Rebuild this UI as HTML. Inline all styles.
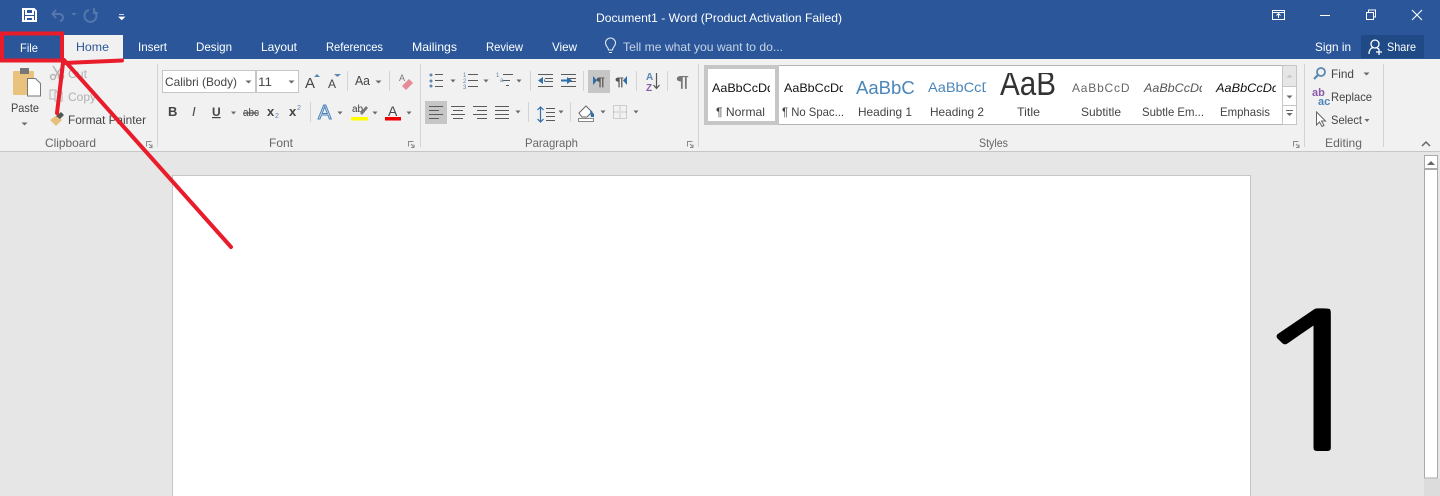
<!DOCTYPE html>
<html><head><meta charset="utf-8"><title>Document1 - Word</title>
<style>
html,body{margin:0;padding:0;width:1440px;height:496px;overflow:hidden;background:#e6e6e6}
#wrap{position:absolute;left:0;top:0;width:1440px;height:496px;overflow:hidden;contain:strict}
svg{display:block;position:absolute;left:0;top:0}
text{font-family:"Liberation Sans",sans-serif;font-size:12px;fill:#444}
.w text{fill:#fff}
.s{fill:none;stroke:#5a5a5a;stroke-width:1}
.b{stroke:#5a87b0;stroke-width:1;fill:none}
.d{fill:#6a6a6a}
.sep{stroke:#d4d4d4;stroke-width:1}
#one{position:absolute;left:1244px;top:288px;height:190px;font:190px/190px "NanumGothic",sans-serif;color:#000;transform-origin:0 0;transform:scaleX(1.23);-webkit-text-stroke:1px #000}
</style></head><body><div id="wrap">
<svg width="1440" height="496" viewBox="0 0 1440 496">
<rect width="1440" height="59" fill="#2b579a"/>
<rect y="59" width="1440" height="92" fill="#f1f1f1"/>
<rect y="151" width="1440" height="1" fill="#c6c6c6"/>
<rect x="63" y="35" width="60" height="25" fill="#f1f1f1"/>
<rect x="172.500" y="175.500" width="1078" height="330" fill="#fff" stroke="#c6c6c6"/>
<rect x="1424" y="152" width="16" height="344" fill="#e6e6e6"/>
<rect x="1424.500" y="155.500" width="13" height="13" fill="#fff" stroke="#aaa"/>
<path d="M1427 165l4-4 4 4z" fill="#666"/>
<rect x="1424.500" y="169.500" width="13" height="308.500" fill="#fff" stroke="#aaa"/>
<rect x="1424" y="479" width="16" height="17" fill="#dcdcdc"/>

<!-- QAT -->
<path d="M23 9h11l2 2v10h-13z M26 9v5h7v-5 M26 21v-4h7v4" fill="none" stroke="#fff" stroke-width="2"/>
<path d="M56 10l-3.500 4 3.500 4M53 14h6a3.500 3.500 0 0 1 1 7" fill="none" stroke="#5577ab" stroke-width="2"/>
<path d="M71 13l3 2.500 3-2.500z" fill="#5577ab"/>
<path d="M89 10a6 6 0 1 0 5 1M94 8v5h4" fill="none" stroke="#5577ab" stroke-width="2"/>
<path d="M119 14.500h5M119 17h5.500l-2.700 2.700z" fill="#fff" stroke="#fff" stroke-width=".8"/>

<!-- window buttons -->
<g fill="none" stroke="#fff">
<rect x="1272.500" y="10.500" width="12" height="9"/><path d="M1272.500 12.500h12M1278.500 18v-4M1276.500 15.500l2-2 2 2"/>
<path d="M1320 15.500h10"/>
<rect x="1366.500" y="12.500" width="7" height="7"/><path d="M1368.500 12.500v-2.500h7v7h-2"/>
<path d="M1412 10l10 10M1422 10l-10 10" stroke-width="1.100"/>
</g>
<rect x="1361" y="35" width="63" height="23" fill="#1f4a85"/>
<g fill="none" stroke="#fff" stroke-width="1.300"><circle cx="1375" cy="44" r="4"/><path d="M1369 54c0-4 2-6 4-6.500M1377 48l2 1M1376 52h6M1379 49v6"/></g>
<g fill="none" stroke="#e4e8f0" stroke-width="1.100"><path d="M608.500 50c0-3-3-3.500-3-7a5 5 0 0 1 10 0c0 3.500-3 4-3 7zM609 52.500h3"/></g>

<g class="w">
<text x="596" y="22" textLength="246" lengthAdjust="spacingAndGlyphs">Document1 - Word (Product Activation Failed)</text>
<text x="20" y="52" textLength="18" lengthAdjust="spacingAndGlyphs">File</text>
<text x="138" y="51" textLength="29" lengthAdjust="spacingAndGlyphs">Insert</text>
<text x="196" y="51" textLength="36" lengthAdjust="spacingAndGlyphs">Design</text>
<text x="261" y="51" textLength="36" lengthAdjust="spacingAndGlyphs">Layout</text>
<text x="326" y="51" textLength="57" lengthAdjust="spacingAndGlyphs">References</text>
<text x="412" y="51" textLength="45" lengthAdjust="spacingAndGlyphs">Mailings</text>
<text x="486" y="51" textLength="37" lengthAdjust="spacingAndGlyphs">Review</text>
<text x="552" y="51" textLength="25" lengthAdjust="spacingAndGlyphs">View</text>
<text x="623" y="51" textLength="160" lengthAdjust="spacingAndGlyphs" style="fill:#c6d3e6">Tell me what you want to do...</text>
<text x="1315" y="51" textLength="36" lengthAdjust="spacingAndGlyphs">Sign in</text>
<text x="1387" y="51" textLength="29" lengthAdjust="spacingAndGlyphs">Share</text>
</g>
<text x="76" y="51" textLength="33" lengthAdjust="spacingAndGlyphs" style="fill:#2b579a">Home</text>

<!-- separators -->
<g class="sep">
<path d="M157.500 64v83M420.500 64v83M698.500 64v83M1304.500 64v83M1383.500 64v83"/>
<path d="M347.500 71v20M389.500 71v20M310.500 102v20M530.500 71v20M583.500 71v20M636.500 71v20M667.500 71v20M528.500 102v20M570.500 102v20"/>
</g>

<!-- clipboard -->
<rect x="13" y="71" width="21" height="24" rx="1" fill="#e9c27d"/>
<rect x="20" y="68" width="9" height="6" fill="#777"/>
<path d="M27.500 78.500h8l5 5v12.500h-13z" fill="#fff" stroke="#777"/>
<text x="11" y="112" textLength="28" lengthAdjust="spacingAndGlyphs">Paste</text>
<path d="M21.500 122.500h6l-3 3z" class="d"/>
<g fill="none" stroke="#b5b5b5" stroke-width="1.500"><path d="M53 66l7 11M62 66l-7 11"/><circle cx="53" cy="77" r="2.500"/><circle cx="61" cy="77" r="2.500"/>
<rect x="50" y="90" width="6" height="9" stroke-width="1"/><rect x="55" y="92" width="7" height="9" fill="#f1f1f1" stroke-width="1"/></g>
<text x="68" y="78" textLength="19" lengthAdjust="spacingAndGlyphs" style="fill:#b0b0b0">Cut</text>
<text x="68" y="101" textLength="28" lengthAdjust="spacingAndGlyphs" style="fill:#b0b0b0">Copy</text>
<path d="M50 120l7-5 5 5-6 6z" fill="#e7c07e"/><path d="M56 116l5-4 3 3-4 4z" fill="#555"/>
<text x="68" y="124" textLength="78" lengthAdjust="spacingAndGlyphs">Format Painter</text>
<text x="45" y="147" textLength="51" lengthAdjust="spacingAndGlyphs" style="fill:#666">Clipboard</text>
<g fill="none" stroke="#8a8a8a"><path d="M146.500 146.500v-5h5"/><path d="M149 144l3 3M152 144.500v3h-3"/></g>
<g fill="none" stroke="#8a8a8a"><path d="M408.500 146.500v-5h5M411 144l3 3M414 144.500v3h-3"/><path d="M687.500 146.500v-5h5M690 144l3 3M693 144.500v3h-3"/><path d="M1293.500 146.500v-5h5M1296 144l3 3M1299 144.500v3h-3"/></g>

<!-- font -->
<rect x="162.500" y="70.500" width="93" height="22" fill="#fff" stroke="#c6c6c6"/>
<rect x="256.500" y="70.500" width="42" height="22" fill="#fff" stroke="#c6c6c6"/>
<text x="165" y="86" textLength="72" lengthAdjust="spacingAndGlyphs">Calibri (Body)</text>
<text x="258" y="86" textLength="14" lengthAdjust="spacingAndGlyphs">11</text>
<path class="d" d="M245.500 80.500h6l-3 3zM288.500 80.500h6l-3 3z"/>
<text x="305" y="88" style="font-size:15px">A</text><path d="M314 77l3-3 3 3z" fill="#5a87b0"/>
<text x="328" y="88" style="font-size:12px">A</text><path d="M334 74h7l-3.500 3z" fill="#5a87b0"/>
<text x="355" y="85" textLength="15" lengthAdjust="spacingAndGlyphs" style="font-size:13px">Aa</text>
<path class="d" d="M375.500 80.500h6l-3 3z"/>
<text x="399" y="81" style="font-size:9px;fill:#777">A</text><path d="M402 86l7-7 4 4-7 7z" fill="#e58a96"/>
<text x="168" y="116" style="font-weight:bold;font-size:13px">B</text>
<text x="192" y="116" style="font-style:italic;font-size:13px">I</text>
<text x="212" y="116" style="font-weight:bold;text-decoration:underline">U</text>
<path class="d" d="M231 111.500h5l-2.500 3z"/>
<text x="243" y="116" textLength="16" lengthAdjust="spacingAndGlyphs" style="font-size:11px;text-decoration:line-through">abc</text>
<text x="267" y="116" style="font-weight:bold;font-size:13px">x</text><text x="275" y="118" style="font-size:7px;fill:#5a87b0">2</text>
<text x="289" y="116" style="font-weight:bold;font-size:13px">x</text><text x="297" y="110" style="font-size:7px;fill:#5a87b0">2</text>
<text x="318" y="119" style="font-size:20px;fill:#dbe8f5;stroke:#4d82b8;stroke-width:1">A</text>
<path class="d" d="M337.500 111.500h5l-2.500 3zM372.500 111.500h5l-2.500 3zM406.500 111.500h5l-2.500 3z"/>
<text x="352" y="112" style="font-size:10px">ab</text><path d="M360 113l6-7 2 2-6 7z" fill="#777"/>
<rect x="351" y="117" width="17" height="3.500" fill="#ffff00"/>
<text x="388" y="116" style="font-size:14px">A</text>
<rect x="385" y="117" width="16" height="3.500" fill="#f00000"/>
<text x="269" y="147" textLength="24" lengthAdjust="spacingAndGlyphs" style="fill:#666">Font</text>

<!-- paragraph -->
<rect x="588" y="70" width="22" height="23" fill="#c6c6c6"/>
<rect x="425" y="101" width="22" height="23" fill="#c6c6c6"/>
<g fill="#5a87b0"><circle cx="431" cy="75" r="1.500"/><circle cx="431" cy="81" r="1.500"/><circle cx="431" cy="86" r="1.500"/></g>
<g class="s"><path d="M435 74.500h8M435 80.500h8M435 86.500h8M468 74.500h10M468 80.500h10M468 86.500h10M503 74.500h10M503 80.500h7M506 85.500h3"/></g>
<text x="463" y="77" style="font-size:6px;fill:#5a87b0">1</text><text x="463" y="83" style="font-size:6px;fill:#5a87b0">2</text><text x="463" y="89" style="font-size:6px;fill:#5a87b0">3</text><text x="496" y="77" style="font-size:6px;fill:#5a87b0">1</text><text x="500" y="82" style="font-size:6px;fill:#5a87b0">a</text>
<path class="d" d="M450.500 79.500h5l-2.500 3zM483.500 79.500h5l-2.500 3zM516.500 79.500h5l-2.500 3zM515.500 110.500h5l-2.500 3zM558.500 110.500h5l-2.500 3zM600.500 110.500h5l-2.500 3zM633.500 110.500h5l-2.500 3z"/>
<g class="s"><path d="M538 74.500h15M545 78.500h8M545 81.500h8M538 86.500h15M561 74.500h15M568 78.500h8M568 81.500h8M561 86.500h15"/></g>
<path d="M538 80.500l5-3.500v7zM544 79.500h1v2h-1zM567 77l5 3.500-5 3.500z" fill="#2f6ea8"/><path d="M561 79.500h6v2h-6z" fill="#2f6ea8"/>
<text x="596" y="86" style="font-size:12px;font-weight:bold;fill:#555" textLength="9" lengthAdjust="spacingAndGlyphs">¶</text><path d="M593 76l4 4.500-4 4.500z" fill="#2f6ea8"/>
<text x="615" y="86" style="font-size:12px;font-weight:bold;fill:#555" textLength="9" lengthAdjust="spacingAndGlyphs">¶</text><path d="M627 76l-4 4.500 4 4.500z" fill="#2f6ea8"/>
<text x="646" y="80" style="font-size:10px;fill:#5a87b0;font-weight:bold">A</text><text x="646" y="91" style="font-size:10px;fill:#8a5ca8;font-weight:bold">Z</text>
<path d="M656.500 73v15M653.500 85l3 3.500 3-3.500" fill="none" stroke="#555" stroke-width="1.200"/>
<text x="676" y="87" style="font-size:16px;font-weight:bold;fill:#777" textLength="13" lengthAdjust="spacingAndGlyphs">¶</text>
<g class="s"><path d="M429 106.500h14M429 110.500h10M429 114.500h14M429 118.500h10M451 106.500h14M453 110.500h10M451 114.500h14M453 118.500h10M473 106.500h14M477 110.500h10M473 114.500h14M477 118.500h10M495 106.500h14M495 110.500h14M495 114.500h14M495 118.500h14"/></g>
<path d="M540.500 107v15M537.500 110l3-3 3 3M537.500 119l3 3 3-3" fill="none" stroke="#2f6ea8" stroke-width="1.200"/>
<g class="s"><path d="M546 108.500h9M546 112.500h9M546 116.500h9M546 120.500h9"/></g>
<path d="M579 113l7-7 6 6-5 5h-5z" fill="#fff" stroke="#666"/><path d="M590 110l4 4v3h-3z" fill="#2f6ea8"/>
<rect x="578.500" y="118.500" width="15" height="3" fill="#fff" stroke="#888"/>
<path d="M613.500 105.500h13v13h-13zM620 105.500v13M613.500 112h13" fill="none" stroke="#aaa" stroke-dasharray="1 1"/>
<text x="525" y="147" textLength="53" lengthAdjust="spacingAndGlyphs" style="fill:#666">Paragraph</text>

<!-- styles -->
<rect x="704.500" y="65.500" width="578" height="59" fill="#fff" stroke="#b4b4b4"/>
<rect x="706" y="67" width="71" height="56" fill="none" stroke="#c6c6c6" stroke-width="4"/>
<rect x="1282.500" y="65.500" width="14" height="21" fill="#e6e6e6" stroke="#c6c6c6"/>
<rect x="1282.500" y="86.500" width="14" height="19" fill="#fff" stroke="#c6c6c6"/>
<rect x="1282.500" y="105.500" width="14" height="19" fill="#fff" stroke="#c6c6c6"/>
<path d="M1286.500 77.500l3-3 3 3z" fill="#c6c6c6"/><path class="d" d="M1286.500 95.500h6l-3 3zM1286.500 113h6l-3 3z"/><path d="M1286 110.500h7" stroke="#666"/>
<defs>
<clipPath id="c1"><rect x="711" y="72" width="59" height="28"/></clipPath>
<clipPath id="c2"><rect x="783" y="72" width="60" height="28"/></clipPath>
<clipPath id="c3"><rect x="855" y="72" width="59" height="28"/></clipPath>
<clipPath id="c4"><rect x="927" y="72" width="59" height="28"/></clipPath>
<clipPath id="c5"><rect x="996" y="73" width="66" height="26"/></clipPath>
<clipPath id="c6"><rect x="1071" y="72" width="60" height="28"/></clipPath>
<clipPath id="c7"><rect x="1143" y="72" width="59" height="28"/></clipPath>
<clipPath id="c8"><rect x="1215" y="72" width="61" height="28"/></clipPath>
</defs>
<text x="712" y="92" clip-path="url(#c1)" style="fill:#111" textLength="62" lengthAdjust="spacingAndGlyphs">AaBbCcDd</text>
<text x="784" y="92" clip-path="url(#c2)" style="fill:#111" textLength="62" lengthAdjust="spacingAndGlyphs">AaBbCcDd</text>
<text x="856" y="94" clip-path="url(#c3)" style="font-size:18px;fill:#4a86ba" textLength="68" lengthAdjust="spacingAndGlyphs">AaBbCc</text>
<text x="928" y="92" clip-path="url(#c4)" style="font-size:14px;fill:#4a86ba" textLength="64" lengthAdjust="spacingAndGlyphs">AaBbCcD</text>
<text x="1000" y="95" clip-path="url(#c5)" style="font-size:34px;fill:#333" textLength="56" lengthAdjust="spacingAndGlyphs">AaB</text>
<text x="1072" y="92" clip-path="url(#c6)" style="fill:#666;letter-spacing:.8px">AaBbCcD</text>
<text x="1144" y="92" clip-path="url(#c7)" style="font-style:italic;fill:#555" textLength="62" lengthAdjust="spacingAndGlyphs">AaBbCcDd</text>
<text x="1216" y="92" clip-path="url(#c8)" style="font-style:italic;fill:#111" textLength="63" lengthAdjust="spacingAndGlyphs">AaBbCcDd</text>
<text x="716" y="116" textLength="49" lengthAdjust="spacingAndGlyphs">¶ Normal</text>
<text x="782" y="116" textLength="62" lengthAdjust="spacingAndGlyphs">¶ No Spac...</text>
<text x="858" y="116" textLength="54" lengthAdjust="spacingAndGlyphs">Heading 1</text>
<text x="930" y="116" textLength="54" lengthAdjust="spacingAndGlyphs">Heading 2</text>
<text x="1017" y="116" textLength="23" lengthAdjust="spacingAndGlyphs">Title</text>
<text x="1081" y="116" textLength="40" lengthAdjust="spacingAndGlyphs">Subtitle</text>
<text x="1142" y="116" textLength="62" lengthAdjust="spacingAndGlyphs">Subtle Em...</text>
<text x="1220" y="116" textLength="50" lengthAdjust="spacingAndGlyphs">Emphasis</text>
<text x="979" y="147" textLength="29" lengthAdjust="spacingAndGlyphs" style="fill:#666">Styles</text>

<!-- editing -->
<circle cx="1321" cy="72" r="4" fill="none" stroke="#5a87b0" stroke-width="1.800"/><path d="M1318 75l-4 4" stroke="#5a87b0" stroke-width="2.200"/>
<text x="1331" y="78" textLength="23" lengthAdjust="spacingAndGlyphs">Find</text>
<path class="d" d="M1363.500 72.500h6l-3 3zM1364.500 119h5l-2.500 3z"/>
<text x="1312" y="96" style="font-size:11px;font-weight:bold;fill:#8a5ca8">ab</text>
<text x="1318" y="105" style="font-size:11px;font-weight:bold;fill:#4f86b8">ac</text>
<text x="1331" y="101" textLength="41" lengthAdjust="spacingAndGlyphs">Replace</text>
<path d="M1316.500 112v13l3-3 2.500 4.500 2-1-2.500-4.500h4z" fill="#fff" stroke="#666"/>
<text x="1331" y="124" textLength="31" lengthAdjust="spacingAndGlyphs">Select</text>
<text x="1325" y="147" textLength="37" lengthAdjust="spacingAndGlyphs" style="fill:#666">Editing</text>
<path d="M1422 146l4-4 4 4" fill="none" stroke="#666" stroke-width="1.500"/>

<!-- red annotations -->
<rect x="2" y="33.500" width="60" height="27" fill="none" stroke="#e81c2b" stroke-width="4"/>
<g fill="none" stroke="#e81c2b" stroke-linecap="round" stroke-width="4">
<path d="M64 63L122 60.500"/>
<path d="M63 63L57 113"/>
<path d="M64 60L231 247"/>
</g>
</svg>
<div id="one">1</div>
</div></body></html>
